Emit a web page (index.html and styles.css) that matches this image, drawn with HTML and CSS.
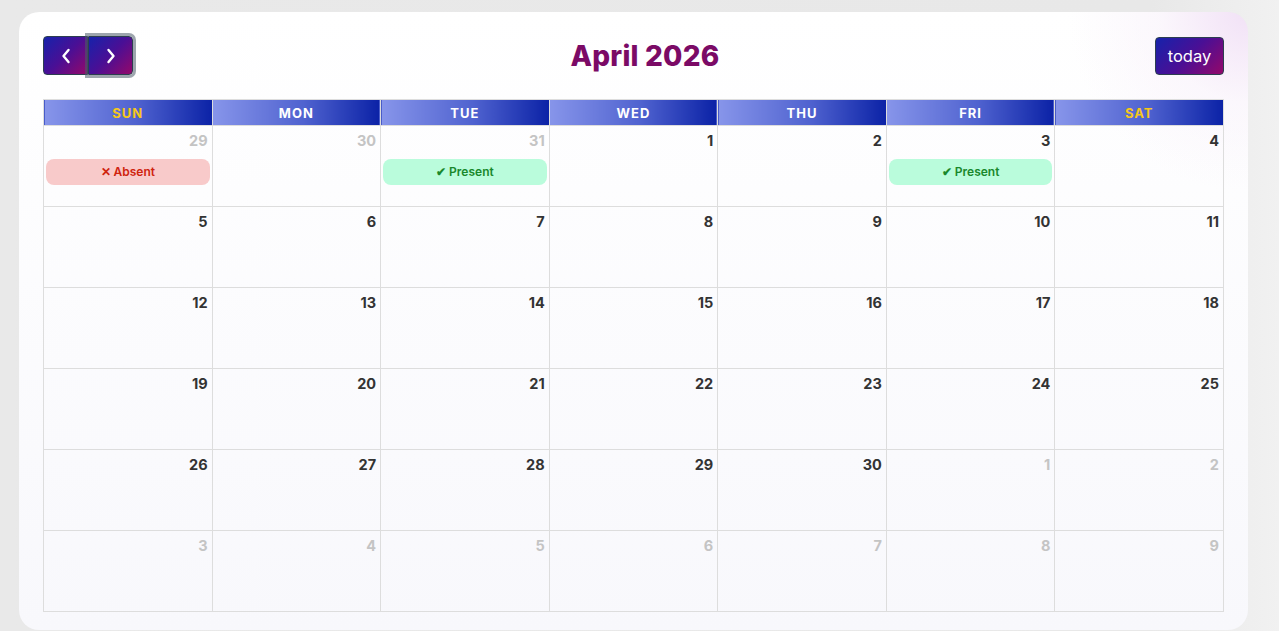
FILE: index.html
```html
<!DOCTYPE html>
<html lang="en">
<head>
    <meta charset="UTF-8">
    <meta name="viewport" content="width=device-width, initial-scale=1.0">
    <title>Attendance Calendar</title>
    <link rel="stylesheet" href="styles.css">
</head>
<body>
    <div class="card">
        <div class="toolbar">
            <div class="nav-group">
                <button class="btn nav-btn prev" aria-label="prev">
                    <svg width="10" height="16" viewBox="0 0 10 16"><path d="M7.5 2 L2.5 8 L7.5 14" fill="none" stroke="#fff" stroke-width="2.4" stroke-linecap="round" stroke-linejoin="round"/></svg>
                </button>
                <button class="btn nav-btn next focused" aria-label="next">
                    <svg width="10" height="16" viewBox="0 0 10 16"><path d="M2.5 2 L7.5 8 L2.5 14" fill="none" stroke="#fff" stroke-width="2.4" stroke-linecap="round" stroke-linejoin="round"/></svg>
                </button>
            </div>
            <h2 class="title">April 2026</h2>
            <button class="btn today-btn">today</button>
        </div>

        <table class="calendar">
            <thead>
                <tr>
                    <th class="weekend">Sun</th>
                    <th>Mon</th>
                    <th>Tue</th>
                    <th>Wed</th>
                    <th>Thu</th>
                    <th>Fri</th>
                    <th class="weekend">Sat</th>
                </tr>
            </thead>
            <tbody>
                <tr>
                    <td class="other"><div class="num">29</div><div class="event absent">&#x2715; Absent</div></td>
                    <td class="other"><div class="num">30</div></td>
                    <td class="other"><div class="num">31</div><div class="event present">&#x2714; Present</div></td>
                    <td><div class="num">1</div></td>
                    <td><div class="num">2</div></td>
                    <td><div class="num">3</div><div class="event present">&#x2714; Present</div></td>
                    <td><div class="num">4</div></td>
                </tr>
                <tr>
                    <td><div class="num">5</div></td>
                    <td><div class="num">6</div></td>
                    <td><div class="num">7</div></td>
                    <td><div class="num">8</div></td>
                    <td><div class="num">9</div></td>
                    <td><div class="num">10</div></td>
                    <td><div class="num">11</div></td>
                </tr>
                <tr>
                    <td><div class="num">12</div></td>
                    <td><div class="num">13</div></td>
                    <td><div class="num">14</div></td>
                    <td><div class="num">15</div></td>
                    <td><div class="num">16</div></td>
                    <td><div class="num">17</div></td>
                    <td><div class="num">18</div></td>
                </tr>
                <tr>
                    <td><div class="num">19</div></td>
                    <td><div class="num">20</div></td>
                    <td><div class="num">21</div></td>
                    <td><div class="num">22</div></td>
                    <td><div class="num">23</div></td>
                    <td><div class="num">24</div></td>
                    <td><div class="num">25</div></td>
                </tr>
                <tr>
                    <td><div class="num">26</div></td>
                    <td><div class="num">27</div></td>
                    <td><div class="num">28</div></td>
                    <td><div class="num">29</div></td>
                    <td><div class="num">30</div></td>
                    <td class="other"><div class="num">1</div></td>
                    <td class="other"><div class="num">2</div></td>
                </tr>
                <tr>
                    <td class="other"><div class="num">3</div></td>
                    <td class="other"><div class="num">4</div></td>
                    <td class="other"><div class="num">5</div></td>
                    <td class="other"><div class="num">6</div></td>
                    <td class="other"><div class="num">7</div></td>
                    <td class="other"><div class="num">8</div></td>
                    <td class="other"><div class="num">9</div></td>
                </tr>
            </tbody>
        </table>
    </div>
</body>
</html>
```

FILE: styles.css
```css
html, body {
    height: 100%;
}
body {
    margin: 0;
    padding: 12px 31px 0 19px;
    font-family: Inter, "Open Sans", sans-serif;
    background: linear-gradient(90deg, #e9e9e9 0%, #e8e8e8 90%, #f1f1f1 100%);
    overflow: hidden;
}
.card {
    box-sizing: border-box;
    height: 618px;
    padding: 24px;
    border-radius: 20px;
    background:
        radial-gradient(circle at 100% 0%, rgba(240, 222, 245, 0.9) 0, rgba(248, 240, 250, 0.5) 90px, rgba(255, 255, 255, 0) 180px),
        linear-gradient(180deg, #ffffff 0%, #f8f8fc 100%);
}
.toolbar {
    display: flex;
    align-items: center;
    justify-content: space-between;
    height: 39px;
    margin-bottom: 24px;
}
.nav-group {
    display: flex;
}
.btn {
    box-sizing: border-box;
    border: 1px solid #2c3e50;
    color: #fff;
    cursor: pointer;
    background: linear-gradient(135deg, #1622ab 0%, #4a0f95 50%, #94086a 100%);
    font-family: inherit;
}
.nav-btn {
    width: 45px;
    height: 39px;
    display: flex;
    align-items: center;
    justify-content: center;
    padding: 0;
}
.prev {
    border-radius: 4px 0 0 4px;
}
.next {
    border-radius: 0 4px 4px 0;
}
.focused {
    box-shadow: 0 0 0 3px rgba(76, 91, 106, 0.55);
}
.title {
    margin: 0 0 0 2px;
    font-size: 28px;
    font-weight: 800;
    color: #7b0a66;
    letter-spacing: 0.2px;
}
.today-btn {
    width: 69px;
    height: 38px;
    border-radius: 4px;
    font-size: 16.5px;
    padding: 0;
}
.calendar {
    width: 100%;
    border-collapse: collapse;
    table-layout: fixed;
}
.calendar th {
    height: 25px;
    padding: 0;
    border: 1px solid #ddd;
    border-left-color: #fff;
    background: linear-gradient(90deg, #8795ea 0%, #4f62cf 55%, #0b22a6 100%);
    color: #fff;
    font-size: 13px;
    font-weight: 700;
    letter-spacing: 1px;
    text-transform: uppercase;
}
.calendar th:first-child {
    border-left-color: #ddd;
}
.calendar th.weekend {
    color: #f6c71a;
}
.calendar td {
    height: 80px;
    padding: 0;
    border: 1px solid #ddd;
    vertical-align: top;
}
.num {
    padding: 4px 4px 0 0;
    text-align: right;
    font-size: 14.5px;
    font-weight: 700;
    line-height: 22px;
    color: #333;
}
.other .num {
    color: #c4c4c4;
}
.event {
    margin: 7px 2px 0;
    height: 26px;
    line-height: 26px;
    border-radius: 8px;
    text-align: center;
    font-size: 12px;
    font-weight: 600;
}
.absent {
    background: #f8caca;
    color: #cf240e;
}
.present {
    background: #bafcdc;
    color: #19882c;
}
```
